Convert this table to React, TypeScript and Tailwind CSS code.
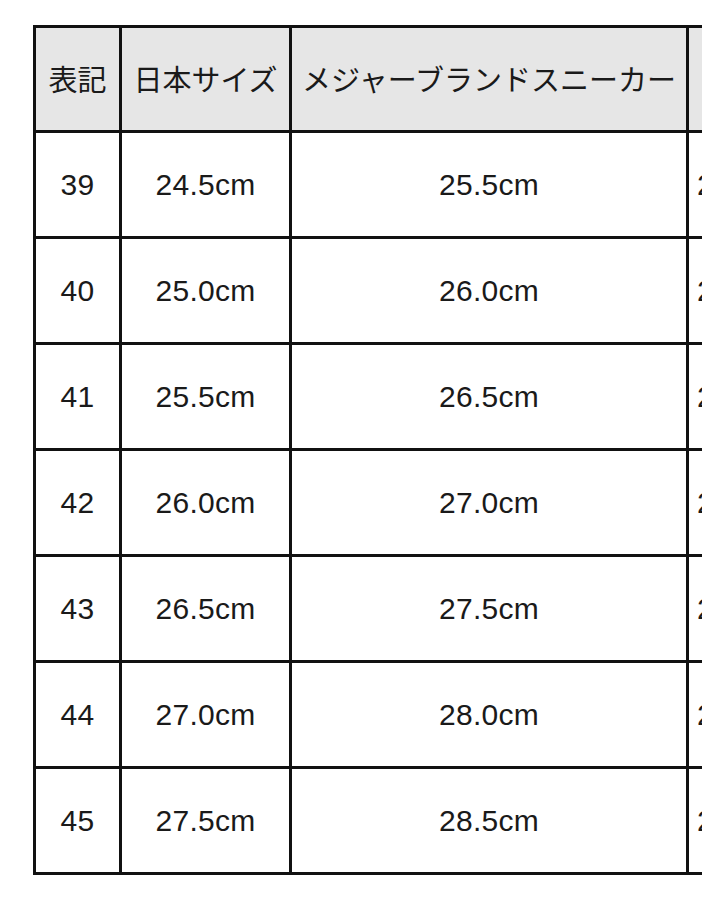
const rows = [
  ["39", "24.5cm", "25.5cm", "26.0cm"],
  ["40", "25.0cm", "26.0cm", "26.5cm"],
  ["41", "25.5cm", "26.5cm", "27.0cm"],
  ["42", "26.0cm", "27.0cm", "27.5cm"],
  ["43", "26.5cm", "27.5cm", "28.0cm"],
  ["44", "27.0cm", "28.0cm", "28.5cm"],
  ["45", "27.5cm", "28.5cm", "29.0cm"],
];

const headers = ["表記", "日本サイズ", "メジャーブランドスニーカー", "ビジネスシューズ"];

export default function App() {
  return (
    <div className="h-[899px] w-[702px] overflow-hidden bg-white pl-[33px] pt-[25px]">
      <table className="w-[1000px] table-fixed border-collapse text-[#1a1a1a] [font-family:'Liberation_Sans','Noto_Sans_CJK_JP',sans-serif]">
        <colgroup>
          <col className="w-[86px]" />
          <col className="w-[170px]" />
          <col className="w-[397px]" />
          <col className="w-[347px]" />
        </colgroup>
        <thead>
          <tr className="h-[105px] bg-[#e6e6e6]">
            {headers.map((h, i) => (
              <th
                key={h}
                className={
                  "whitespace-nowrap border-[3px] border-[#111] px-0 text-[29px] font-normal [font-family:'Noto_Sans_CJK_JP',sans-serif] " +
                  (i === 3 ? "pl-[9px] text-left" : "text-center")
                }
              >
                {h}
              </th>
            ))}
          </tr>
        </thead>
        <tbody>
          {rows.map((r) => (
            <tr key={r[0]} className="h-[106px]">
              {r.map((c, i) => (
                <td
                  key={i}
                  className={
                    "whitespace-nowrap border-[3px] border-[#111] text-[30px] tracking-[0.3px] " +
                    (i === 3 ? "pl-[8px] text-left" : "text-center")
                  }
                >
                  {c}
                </td>
              ))}
            </tr>
          ))}
        </tbody>
      </table>
    </div>
  );
}
